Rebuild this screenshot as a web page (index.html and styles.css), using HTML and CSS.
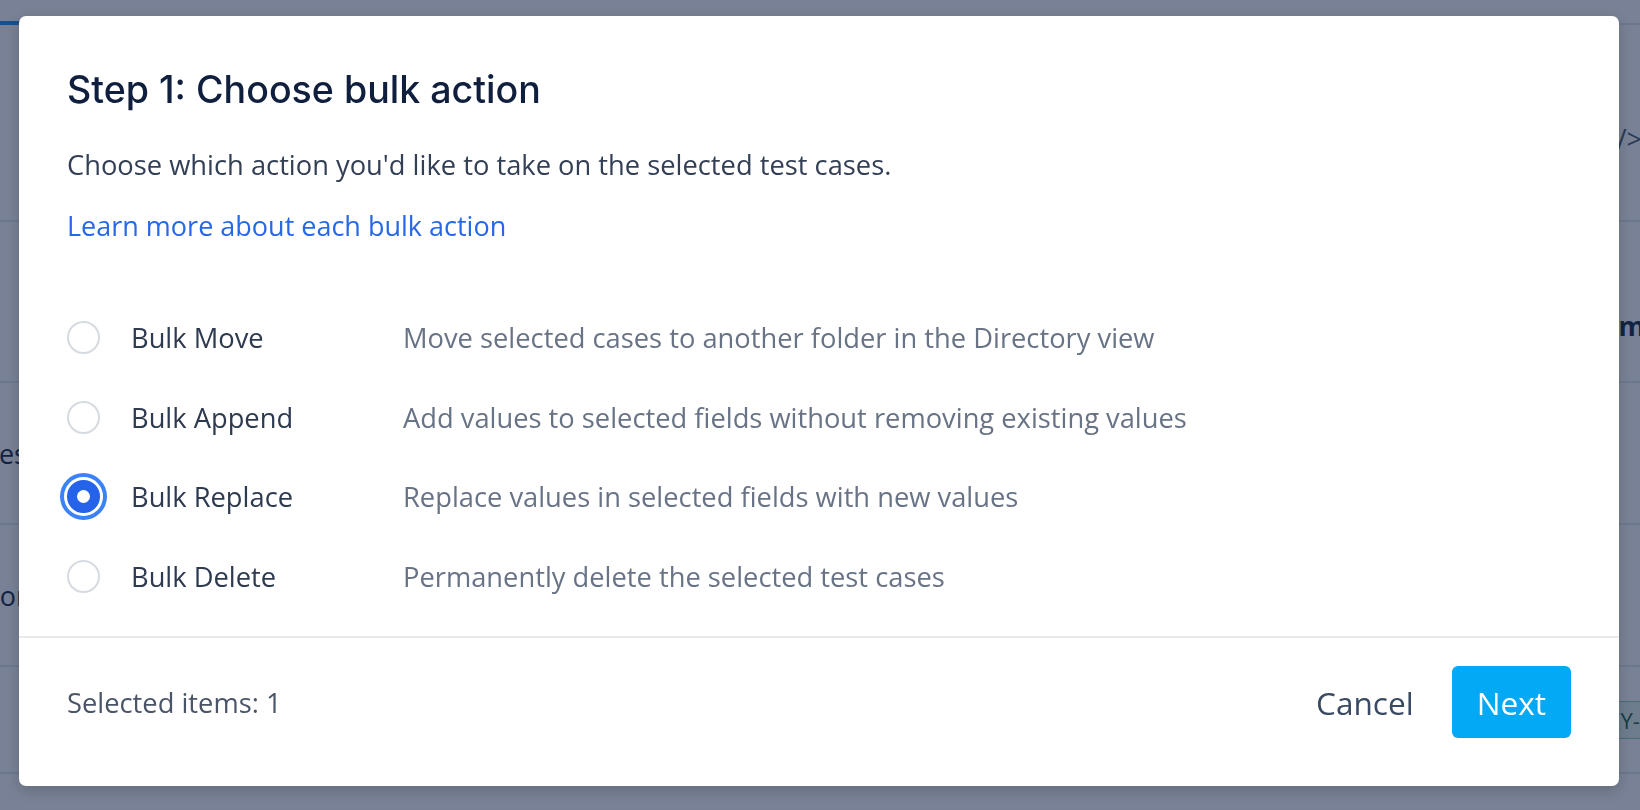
FILE: index.html
```html
<html lang="en">
<head>
    <meta charset="UTF-8">
    <meta name="viewport" content="width=device-width, initial-scale=1.0">
    <title>Bulk action</title>
    <link rel="stylesheet" href="styles.css">
</head>
<body>
    <!-- page behind the dialog -->
    <div class="page">
        <div class="tabs"><span class="tab-active"></span></div>
        <div class="row row-1"><span></span><span class="code">&lt;/&gt;</span></div>
        <div class="row row-2"><span></span><span class="bold">Name</span></div>
        <div class="row row-3"><span class="left-cut">Cases</span><span></span></div>
        <div class="row row-4"><span class="left-cut-2">Author</span><span></span></div>
        <div class="row row-5"><span></span><span class="tag">KEY-01</span></div>
    </div>

    <div class="overlay">
        <div class="modal">
            <div class="modal-body">
                <h1 class="title">Step 1: Choose bulk action</h1>
                <p class="intro">Choose which action you'd like to take on the selected test cases.</p>
                <a class="learn" href="javascript:;">Learn more about each bulk action</a>
                <ul class="actions">
                    <li class="action">
                        <span class="radio"></span>
                        <span class="name">Bulk Move</span>
                        <span class="desc">Move selected cases to another folder in the Directory view</span>
                    </li>
                    <li class="action">
                        <span class="radio"></span>
                        <span class="name">Bulk Append</span>
                        <span class="desc">Add values to selected fields without removing existing values</span>
                    </li>
                    <li class="action">
                        <span class="radio checked"></span>
                        <span class="name">Bulk Replace</span>
                        <span class="desc">Replace values in selected fields with new values</span>
                    </li>
                    <li class="action">
                        <span class="radio"></span>
                        <span class="name">Bulk Delete</span>
                        <span class="desc">Permanently delete the selected test cases</span>
                    </li>
                </ul>
            </div>
            <div class="modal-footer">
                <span class="count">Selected items: 1</span>
                <div class="buttons">
                    <a class="btn btn-cancel" href="javascript:;">Cancel</a>
                    <a class="btn btn-next" href="javascript:;">Next</a>
                </div>
            </div>
        </div>
    </div>
</body>
</html>
```

FILE: styles.css
```css
*{
    margin: 0;
    padding: 0;
    box-sizing: border-box;
}
body{
    font-family: "Open Sans", "Noto Sans", sans-serif;
    overflow: hidden;
}

/* background page */
.page{
    height: 100vh;
    background-color: #fff;
    color: #0f1f3d;
    font-size: 27px;
    overflow: hidden;
}
.tabs{
    height: 25px;
    border-bottom: 2px solid #e2e8f0;
    position: relative;
}
.tab-active{
    position: absolute;
    left: 0;
    bottom: -2px;
    width: 120px;
    height: 4px;
    background-color: #1e88e5;
}
.row{
    display: flex;
    justify-content: space-between;
    align-items: center;
    border-bottom: 2px solid #e2e8f0;
    white-space: nowrap;
}
.row-1{ height: 197px; padding-top: 32px; }
.row-2{ height: 161px; padding-top: 48px; }
.row-3{ height: 142px; }
.row-4{ height: 142px; }
.row-5{ height: 107px; }
.code{
    color: #4a5568;
    margin-right: -2px;
}
.bold{
    font-weight: 700;
    margin-right: -21px;
}
.left-cut{ margin-left: -46px; }
.left-cut-2{ margin-left: -60px; }
.tag{
    font-size: 22px;
    color: #1b5e3a;
    background-color: #e6f6ec;
    border: 1px solid #8fd1aa;
    border-radius: 4px;
    padding: 3px 10px;
    margin-right: -36px;
}

/* dialog */
.overlay{
    position: fixed;
    top: 0;
    left: 0;
    right: 0;
    bottom: 0;
    background-color: rgba(22, 38, 72, 0.58);
    padding: 16px 0 0 19px;
}
.modal{
    width: 1600px;
    height: 770px;
    background-color: #fff;
    border-radius: 7px;
    box-shadow: 0 4px 14px rgba(0, 0, 0, 0.18);
    display: flex;
    flex-direction: column;
}
.modal-body{
    padding: 52px 48px 20px;
}
.title{
    font-family: Inter, "Liberation Sans", sans-serif;
    font-size: 37.6px;
    line-height: 44px;
    font-weight: 500;
    color: #0f1f3d;
}
.intro{
    margin-top: 33px;
    font-size: 27.3px;
    line-height: 40px;
    color: #333f55;
}
.learn{
    display: block;
    margin-top: 21px;
    font-size: 27px;
    line-height: 40px;
    color: #2668e8;
    text-decoration: none;
}
.actions{
    list-style: none;
    margin-top: 52px;
}
.action{
    height: 79.5px;
    display: grid;
    grid-template-columns: 64px 272px 1fr;
    align-items: center;
    font-size: 27.3px;
}
.radio{
    width: 33px;
    height: 33px;
    border: 2px solid #d6dae1;
    border-radius: 50%;
    position: relative;
}
.radio.checked{
    background-color: #2563eb;
    border-color: #2563eb;
    box-shadow: 0 0 0 3px #fff, 0 0 0 7px #3b82f6;
}
.radio.checked::after{
    content: "";
    position: absolute;
    left: 50%;
    top: 50%;
    width: 13px;
    height: 13px;
    margin: -6.5px 0 0 -6.5px;
    border-radius: 50%;
    background-color: #fff;
}
.name{
    color: #2d3a4f;
}
.desc{
    color: #697386;
}
.modal-footer{
    flex: 1;
    border-top: 2px solid #e8eaee;
    padding: 28px 48px 48px;
    display: flex;
    justify-content: space-between;
    align-items: center;
}
.count{
    font-size: 27.3px;
    color: #4a5568;
}
.buttons{
    display: flex;
    align-items: center;
}
.btn{
    display: flex;
    align-items: center;
    height: 72px;
    font-size: 31.6px;
    text-decoration: none;
    border-radius: 6px;
}
.btn-cancel{
    color: #3b4a63;
    padding: 0 24px;
    margin-right: 14px;
}
.btn-next{
    color: #fff;
    background-color: #03a9f4;
    padding: 0 25px;
}
```
